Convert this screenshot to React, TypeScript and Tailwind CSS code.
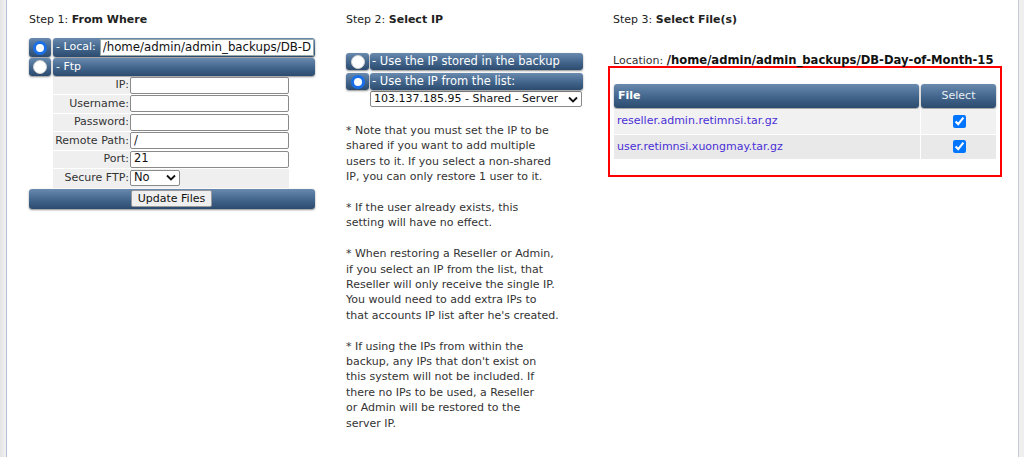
import React from 'react';

const font = { fontFamily: '"DejaVu Sans", Verdana, sans-serif' };

const bar = 'bg-linear-to-b from-[#6a8aae] via-[#45688f] to-[#2c4b6e] rounded-[3px] shadow-[0_1px_2px_rgba(0,0,0,0.45)]';

function Radio({ checked }: { checked?: boolean }) {
    return checked ? (
        <span className="block w-[14px] h-[14px] rounded-full bg-white border-[3px] border-[#1a6fe6]" />
    ) : (
        <span className="block w-[14px] h-[14px] rounded-full bg-white border border-[#d0d0d0]" />
    );
}

function RadioCell({ checked, w = 'w-[22px]' }: { checked?: boolean; w?: string }) {
    return (
        <div className={`${bar} ${w} shrink-0 flex items-center justify-center`}>
            <Radio checked={checked} />
        </div>
    );
}

const ftpFields = [
    { label: 'IP:', value: '' },
    { label: 'Username:', value: '' },
    { label: 'Password:', value: '' },
    { label: 'Remote Path:', value: '/' },
    { label: 'Port:', value: '21' },
];

const notes = [
    ['* Note that you must set the IP to be', 'shared if you want to add multiple', 'users to it. If you select a non-shared', 'IP, you can only restore 1 user to it.'],
    ['* If the user already exists, this', 'setting will have no effect.'],
    ['* When restoring a Reseller or Admin,', 'if you select an IP from the list, that', 'Reseller will only receive the single IP.', "You would need to add extra IPs to", "that accounts IP list after he's created."],
    ['* If using the IPs from within the', "backup, any IPs that don't exist on", 'this system will not be included. If', 'there no IPs to be used, a Reseller', 'or Admin will be restored to the', 'server IP.'],
];

const files = ['reseller.admin.retimnsi.tar.gz', 'user.retimnsi.xuongmay.tar.gz'];

export default function App() {
    return (
        <div className="w-[1024px] h-[457px] flex bg-white text-[#222] text-[11px] overflow-hidden" style={font}>
            {/* left page edge */}
            <div className="w-[7px] shrink-0 bg-linear-to-r from-[#e4e4e4] to-[#f2f2f2] border-r border-[#b3c1d6]" />

            <div className="flex-1 flex pl-[22px] pt-[13px]">
                {/* Step 1 */}
                <div className="w-[286px] shrink-0">
                    <div className="leading-[14px]">Step 1: <b>From Where</b></div>

                    <div className="mt-[11px] flex gap-[2px] h-[19px]">
                        <RadioCell checked />
                        <div className={`${bar} flex-1 flex items-center pl-[3px] pr-[1px] text-white`}>
                            <span className="shrink-0">- Local:</span>
                            <input
                                readOnly
                                value="/home/admin/admin_backups/DB-Day-of-Month-15"
                                className="ml-[4px] w-0 flex-1 h-[17px] bg-white text-[#111] text-[11.8px] px-[2px] border border-[#9aa] outline-none"
                                style={font}
                            />
                        </div>
                    </div>
                    <div className="mt-[1px] flex gap-[2px] h-[18px]">
                        <RadioCell />
                        <div className={`${bar} flex-1 flex items-center pl-[3px] text-white`}>- Ftp</div>
                    </div>

                    <div className="ml-[24px] w-[236px] mt-[1px]">
                        {ftpFields.map(f => (
                            <div key={f.label} className="flex h-[18.4px]">
                                <div className="w-[77px] shrink-0 bg-[#efefef] border-b border-white flex items-center justify-end pr-[1px] text-[#333]">{f.label}</div>
                                <input
                                    readOnly
                                    value={f.value}
                                    className="w-[159px] h-[17px] bg-white border border-[#8a8a8a] rounded-[2px] px-[3px] text-[11.5px] text-[#111] outline-none"
                                    style={font}
                                />
                            </div>
                        ))}
                        <div className="flex h-[19px] bg-[#efefef]">
                            <div className="w-[77px] shrink-0 flex items-center justify-end pr-[1px] text-[#333]">Secure FTP:</div>
                            <div className="w-[50px] h-[16px] mt-[1px] bg-white border border-[#8a8a8a] rounded-[2px] flex items-center justify-between pl-[3px] pr-[3px] text-[11.5px] text-[#111]">
                                <span>No</span>
                                <svg width="10" height="7" viewBox="0 0 10 7"><path d="M1 1.5l4 4 4-4" fill="none" stroke="#111" strokeWidth="1.8" /></svg>
                            </div>
                        </div>
                    </div>

                    <div className={`${bar} mt-[1px] h-[20px] flex items-center pl-[102px]`}>
                        <button className="h-[17px] w-[81px] bg-[#efefef] border border-[#9a9a9a] rounded-[2px] text-[11px] text-[#111]" style={font}>Update Files</button>
                    </div>
                </div>

                {/* Step 2 */}
                <div className="w-[240px] shrink-0 ml-[31px]">
                    <div className="leading-[14px]">Step 2: <b>Select IP</b></div>

                    <div className="mt-[26px] w-[237px] flex flex-col gap-[3px]">
                        <div className="flex gap-[1px] h-[17px]">
                            <RadioCell w="w-[23px]" />
                            <div className={`${bar} flex-1 flex items-center pl-[2px] text-white text-[11.5px]`}>- Use the IP stored in the backup</div>
                        </div>
                        <div className="flex gap-[1px] h-[17px]">
                            <RadioCell checked w="w-[23px]" />
                            <div className={`${bar} flex-1 flex items-center pl-[2px] text-white text-[11.5px]`}>- Use the IP from the list:</div>
                        </div>
                    </div>
                    <div className="ml-[24px] mt-[1px] w-[212px] h-[16px] bg-white border border-[#8a8a8a] rounded-[2px] flex items-center justify-between pl-[3px] pr-[3px] text-[11px] text-[#111]">
                        <span className="whitespace-nowrap overflow-hidden">103.137.185.95 - Shared - Server</span>
                        <svg width="10" height="7" viewBox="0 0 10 7" className="shrink-0"><path d="M1 1.5l4 4 4-4" fill="none" stroke="#111" strokeWidth="1.8" /></svg>
                    </div>

                    <div className="mt-[16px] leading-[15.4px] text-[#333] text-[11px]">
                        {notes.map((p, i) => (
                            <div key={i} className={i > 0 ? 'mt-[15.4px]' : ''}>
                                {p.map(l => (
                                    <div key={l} className="whitespace-nowrap">{l}</div>
                                ))}
                            </div>
                        ))}
                    </div>
                </div>

                {/* Step 3 */}
                <div className="w-[394px] shrink-0 ml-[22px]">
                    <div className="leading-[14px] pl-[5px]">Step 3: <b>Select File(s)</b></div>

                    <div className="mt-[26px] pl-[5px] h-[13px] leading-[14px] whitespace-nowrap">
                        <span className="text-[#333]">Location:</span>{' '}
                        <b className="text-[11.6px] text-[#111]">/home/admin/admin_backups/DB-Day-of-Month-15</b>
                    </div>

                    <div className="border-2 border-[#ff0000] h-[111px] pt-[16px] px-[4px] bg-white">
                        <div className="flex gap-[2px] h-[24px]">
                            <div className={`${bar} w-[305px] flex items-center pl-[4px] text-white font-bold`}>File</div>
                            <div className={`${bar} flex-1 flex items-center justify-center text-[#e8eef5]`}>Select</div>
                        </div>
                        {files.map((f, i) => (
                            <div key={f} className="flex gap-[1px] h-[24.5px] mt-[1px]">
                                <div className={`w-[306px] flex items-center pl-[3px] ${i === 0 ? 'bg-[#f1f1f1]' : 'bg-[#e9e9e9]'}`}>
                                    <span className="text-[#4a2fd6]">{f}</span>
                                </div>
                                <div className={`flex-1 flex items-center justify-center pl-[2px] ${i === 0 ? 'bg-[#f1f1f1]' : 'bg-[#e9e9e9]'}`}>
                                    <input type="checkbox" checked readOnly className="w-[13px] h-[13px] m-0" />
                                </div>
                            </div>
                        ))}
                    </div>
                </div>
            </div>

            {/* right page edge */}
            <div className="w-[6px] shrink-0 bg-[#efefef] border-l border-[#c5ccd6]" />
        </div>
    );
}
